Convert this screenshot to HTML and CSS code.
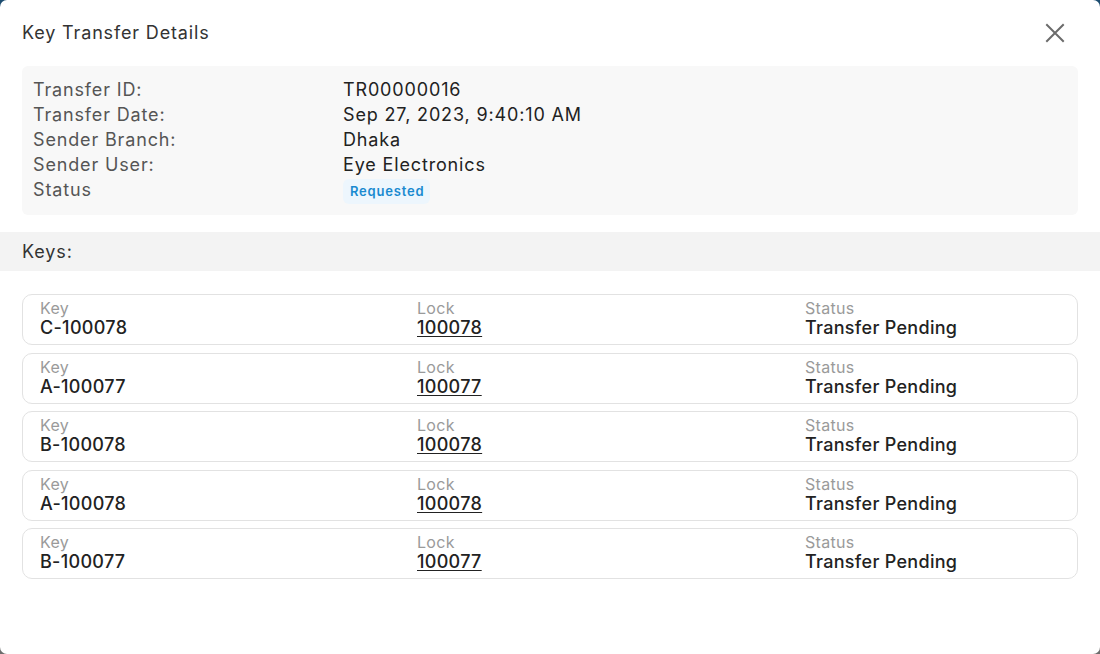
FILE: index.html
```html
<!DOCTYPE html>
<html lang="en">
<head>
<meta charset="utf-8">
<title>Key Transfer Details</title>
<link rel="stylesheet" href="styles.css">
</head>
<body>
<div class="modal">
  <div class="modal-header">
    <h1 class="modal-title">Key Transfer Details</h1>
    <button class="close-btn" aria-label="Close">
      <svg width="20" height="20" viewBox="0 0 20 20"><path d="M2 2 L18 18 M18 2 L2 18" stroke="#6b6b6b" stroke-width="2" fill="none" stroke-linecap="square"/></svg>
    </button>
  </div>
  <div class="info-box">
    <div class="info-row"><span class="info-label">Transfer ID:</span><span class="info-value">TR00000016</span></div>
    <div class="info-row"><span class="info-label">Transfer Date:</span><span class="info-value">Sep 27, 2023, 9:40:10 AM</span></div>
    <div class="info-row"><span class="info-label">Sender Branch:</span><span class="info-value">Dhaka</span></div>
    <div class="info-row"><span class="info-label">Sender User:</span><span class="info-value">Eye Electronics</span></div>
    <div class="info-row"><span class="info-label">Status</span><span class="info-value"><span class="badge">Requested</span></span></div>
  </div>
  <div class="section-bar">Keys:</div>
  <div class="key-list">
    <div class="key-card">
      <div class="col"><div class="col-label">Key</div><div class="col-value">C-100078</div></div>
      <div class="col"><div class="col-label">Lock</div><div class="col-value link">100078</div></div>
      <div class="col"><div class="col-label">Status</div><div class="col-value">Transfer Pending</div></div>
    </div>
    <div class="key-card">
      <div class="col"><div class="col-label">Key</div><div class="col-value">A-100077</div></div>
      <div class="col"><div class="col-label">Lock</div><div class="col-value link">100077</div></div>
      <div class="col"><div class="col-label">Status</div><div class="col-value">Transfer Pending</div></div>
    </div>
    <div class="key-card">
      <div class="col"><div class="col-label">Key</div><div class="col-value">B-100078</div></div>
      <div class="col"><div class="col-label">Lock</div><div class="col-value link">100078</div></div>
      <div class="col"><div class="col-label">Status</div><div class="col-value">Transfer Pending</div></div>
    </div>
    <div class="key-card">
      <div class="col"><div class="col-label">Key</div><div class="col-value">A-100078</div></div>
      <div class="col"><div class="col-label">Lock</div><div class="col-value link">100078</div></div>
      <div class="col"><div class="col-label">Status</div><div class="col-value">Transfer Pending</div></div>
    </div>
    <div class="key-card">
      <div class="col"><div class="col-label">Key</div><div class="col-value">B-100077</div></div>
      <div class="col"><div class="col-label">Lock</div><div class="col-value link">100077</div></div>
      <div class="col"><div class="col-label">Status</div><div class="col-value">Transfer Pending</div></div>
    </div>
  </div>
</div>
</body>
</html>
```

FILE: styles.css
```css
* { box-sizing: border-box; }
html, body { margin: 0; padding: 0; height: 100%; }
body {
  background: linear-gradient(to bottom, #1d4d70 0%, #3a5566 40%, #6d6d6d 100%);
  font-family: Inter, "Noto Sans", sans-serif;
  color: #222;
}
.modal {
  height: 654px;
  background: #fff;
  border-radius: 7px;
  overflow: hidden;
}
.modal-header {
  display: flex;
  justify-content: space-between;
  align-items: flex-start;
  padding: 20px 35px 0 22px;
  height: 66px;
}
.modal-title {
  margin: 0;
  font-size: 18px;
  font-weight: 400;
  color: #333;
  line-height: 24px;
  padding-top: 1px;
  letter-spacing: 0.85px;
}
.close-btn {
  border: 0;
  background: none;
  padding: 0;
  margin-top: 3px;
  width: 20px;
  height: 20px;
  cursor: pointer;
}
.close-btn svg { display: block; }
.info-box {
  margin: 0 22px;
  background: #f8f8f8;
  border-radius: 6px;
  padding: 11px 11px 10px 11px;
  height: 149px;
}
.info-row {
  display: flex;
  font-size: 18px;
  line-height: 25px;
  letter-spacing: 0.85px;
}
.info-label {
  width: 310px;
  color: #555;
}
.info-value { color: #222; }
.badge {
  display: inline-block;
  background: #edf6fd;
  color: #1a8ad0;
  font-size: 13px;
  font-weight: 600;
  line-height: 25px;
  padding: 0 6px 0 7px;
  margin-top: 2px;
  border-radius: 6px;
  vertical-align: top;
  letter-spacing: 0.8px;
}
.section-bar {
  margin-top: 17px;
  background: #f3f3f3;
  height: 39px;
  padding: 0 22px;
  font-size: 18px;
  line-height: 40px;
  color: #333;
  letter-spacing: 0.9px;
}
.key-list {
  padding: 23px 22px 0 22px;
  display: flex;
  flex-direction: column;
  gap: 7.5px;
}
.key-card {
  border: 1px solid #e2e2e2;
  border-radius: 10px;
  height: 51px;
  padding: 4px 17px 0 17px;
  display: grid;
  grid-template-columns: 377px 388px 1fr;
}
.col-label {
  font-size: 16px;
  line-height: 18px;
  color: #9a9a9a;
  letter-spacing: 0.3px;
}
.col-value {
  font-size: 18px;
  line-height: 21px;
  font-weight: 500;
  color: #222;
  letter-spacing: 0.3px;
}
.col-value.link {
  text-decoration: underline;
  text-decoration-thickness: 1px;
  text-underline-offset: 2px;
}
```
